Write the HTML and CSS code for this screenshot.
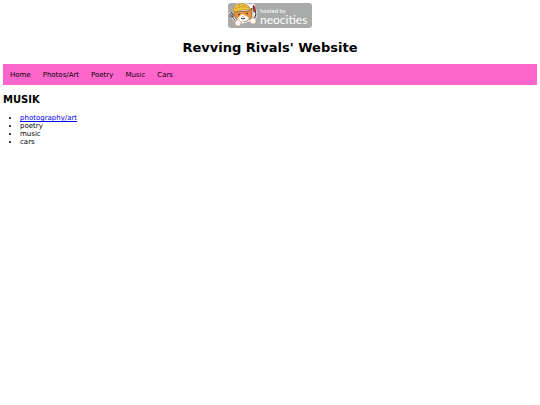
FILE: index.html
```html
<!DOCTYPE html>
<html lang="en">
<head>
    <meta charset="UTF-8">
    <meta name="viewport" content="width=device-width, initial-scale=1.0">
    <title>Revving Rivals' Website</title>
    <link rel="stylesheet" href="styles.css">
</head>
<body>
    <header>
        <a class="badge" href="#" aria-label="hosted by neocities">
            <svg width="84" height="25" viewBox="0 0 84 25">
                <rect width="84" height="25" rx="3" fill="#a9aaaa"/>
                <!-- white outline -->
                <g stroke="#fff" stroke-width="3" stroke-linejoin="round" stroke-linecap="round" fill="#fff">
                    <path d="M6 7l3-5 5-1 9 2 1 8-3 6-7 2-6-4z"/>
                    <path d="M2 11l7 8M25 2l3 8-2 8"/>
                </g>
                <!-- cat -->
                <path d="M6 7l2 2 13-1 3-3v6l-1 4-4 3-6 1-5-3-2-4z" fill="#ea9440" stroke="#4a3324" stroke-width=".6"/>
                <path d="M14 11l2 1 4 2 1 2-3 2-5 1-4-3z" fill="#fff"/>
                <path d="M5 8q0-5 5-7 8-2 12 4l1 2q-8-1-16 2z" fill="#f2c440" stroke="#8a6420" stroke-width=".6"/>
                <path d="M7 6q6-4 14-1M11 1l1 3M16 1v3" fill="none" stroke="#b58a2c" stroke-width=".6"/>
                <path d="M10 12l2-1M18 10l2 1M13 15l2 1 2-1" fill="none" stroke="#30251f" stroke-width="1"/>
                <path d="M14 13h2l-1 1z" fill="#d46e65"/>
                <!-- fork and brush -->
                <path d="M1 11l2 3h2v-2L3 9M2 10l6 9" fill="none" stroke="#444" stroke-width="1"/>
                <path d="M27 8l1 3-2 6" fill="none" stroke="#4f4038" stroke-width="1.2"/>
                <path d="M25 2l2 2 1 5h-2l-1-3z" fill="#b52c36" stroke="#533" stroke-width=".5"/>
                <circle cx="10" cy="20" r="3" fill="#fff" stroke="#d39a68" stroke-width=".6"/>
                <circle cx="25" cy="18" r="3" fill="#fff" stroke="#d39a68" stroke-width=".6"/>
                <text class="badge-small" x="32" y="10">hosted by</text>
                <text class="badge-name" x="32" y="21">neocities</text>
            </svg>
        </a>
        <h1>Revving Rivals' Website</h1>
    </header>
    <nav>
        <a href="#">Home</a>
        <a href="#">Photos/Art</a>
        <a href="#">Poetry</a>
        <a href="#">Music</a>
        <a href="#">Cars</a>
    </nav>
    <main>
        <h2>MUSIK</h2>
        <ul>
            <li><a href="#">photography/art</a></li>
            <li>poetry</li>
            <li>music</li>
            <li>cars</li>
        </ul>
    </main>
</body>
</html>
```
FILE: styles.css
```css
body {
    margin: 3px;
    background-color: white;
    color: black;
    font-family: Verdana, "DejaVu Sans", sans-serif;
    font-size: 7px;
    line-height: 8px;
}

header {
    text-align: center;
}

.badge {
    display: block;
    height: 25px;
}

.badge-small,
.badge-name {
    fill: white;
    font-family: Lato, sans-serif;
}

.badge-small {
    font-size: 6px;
}

.badge-name {
    font-size: 12px;
}

h1 {
    margin: 12px 0 8px;
    font-size: 13px;
    line-height: 16px;
}

nav {
    display: flex;
    padding: 0 1px;
    background-color: #ff66cc;
}

nav a {
    padding: 7px 6px 6px;
    color: black;
    text-decoration: none;
}

h2 {
    margin: 9px 0 8px;
    font-size: 10px;
    line-height: 12px;
}

ul {
    margin: 0;
    padding-left: 17px;
}

li a {
    color: #0000ee;
}
```
